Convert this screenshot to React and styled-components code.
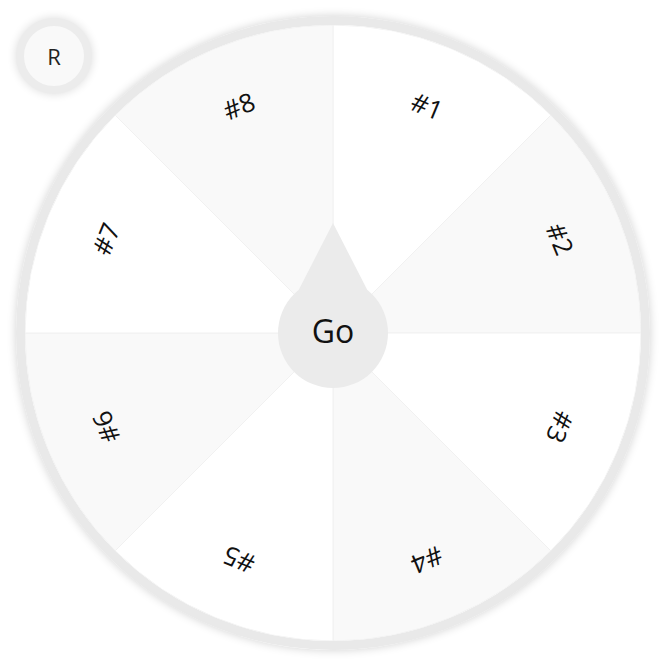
import React from 'react';
import styled, { createGlobalStyle } from 'styled-components';

const GlobalStyle = createGlobalStyle`
    html, body {
        margin: 0;
        padding: 0;
        background: #ffffff;
        font-family: "Open Sans", "Noto Sans", sans-serif;
    }
`;

const Page = styled.div`
    position: relative;
    width: 666px;
    height: 666px;
    display: flex;
    align-items: center;
    justify-content: center;
    overflow: hidden;
`;

const ResetButton = styled.button`
    position: absolute;
    top: 18px;
    left: 16px;
    width: 76px;
    height: 76px;
    border-radius: 50%;
    border: 8px solid #ececec;
    background: #f9f9f9;
    box-shadow: 0 0 10px rgba(0, 0, 0, 0.14);
    font-family: inherit;
    font-size: 22px;
    color: #222;
    padding: 0;
    cursor: pointer;
    z-index: 2;
`;

const Wheel = styled.div`
    position: relative;
    width: 634px;
    height: 634px;
    box-sizing: border-box;
    border-radius: 50%;
    border: 9px solid #e9e9e9;
    box-shadow: 0 0 10px rgba(0, 0, 0, 0.18);
    overflow: hidden;

    svg {
        display: block;
    }
`;

const Label = styled.div`
    position: absolute;
    left: 50%;
    top: 50%;
    width: 80px;
    height: 36px;
    margin: -18px 0 0 -40px;
    text-align: center;
    line-height: 36px;
    font-size: 26px;
    color: #111;
    transform: rotate(${props => props.$angle}deg) translateY(-246px);
`;

const GoButton = styled.button`
    position: absolute;
    z-index: 1;
    left: 50%;
    top: 50%;
    width: 110px;
    height: 110px;
    margin: -55px 0 0 -55px;
    border: none;
    border-radius: 50%;
    background: #ebebeb;
    font-family: inherit;
    font-size: 32px;
    line-height: 1;
    color: #111;
    padding: 0 0 4px;
    cursor: pointer;

    &::before {
        content: '';
        position: absolute;
        left: 50%;
        top: -55px;
        margin-left: -42px;
        border-left: 42px solid transparent;
        border-right: 42px solid transparent;
        border-bottom: 82px solid #ebebeb;
        z-index: -1;
    }

    span {
        position: relative;
    }
`;

const R = 308;

const sectorPath = i => {
    const a0 = (i * 45 - 90) * Math.PI / 180;
    const a1 = ((i + 1) * 45 - 90) * Math.PI / 180;
    const x0 = R + R * Math.cos(a0);
    const y0 = R + R * Math.sin(a0);
    const x1 = R + R * Math.cos(a1);
    const y1 = R + R * Math.sin(a1);
    return `M${R} ${R} L${x0} ${y0} A${R} ${R} 0 0 1 ${x1} ${y1} Z`;
};

const segments = [1, 2, 3, 4, 5, 6, 7, 8];

const App = () => {
    return (
        <Page>
            <GlobalStyle />
            <ResetButton>R</ResetButton>
            <Wheel>
                <svg width={R * 2} height={R * 2} viewBox={`0 0 ${R * 2} ${R * 2}`}>
                    {segments.map((n, i) => (
                        <path
                            key={n}
                            d={sectorPath(i)}
                            fill={i % 2 === 0 ? '#ffffff' : '#f9f9f9'}
                            stroke="#f1f1f1"
                            strokeWidth="1"
                        />
                    ))}
                </svg>
                {segments.map((n, i) => (
                    <Label key={n} $angle={i * 45 + 22.5}>#{n}</Label>
                ))}
                <GoButton><span>Go</span></GoButton>
            </Wheel>
        </Page>
    );
};

export default App;
